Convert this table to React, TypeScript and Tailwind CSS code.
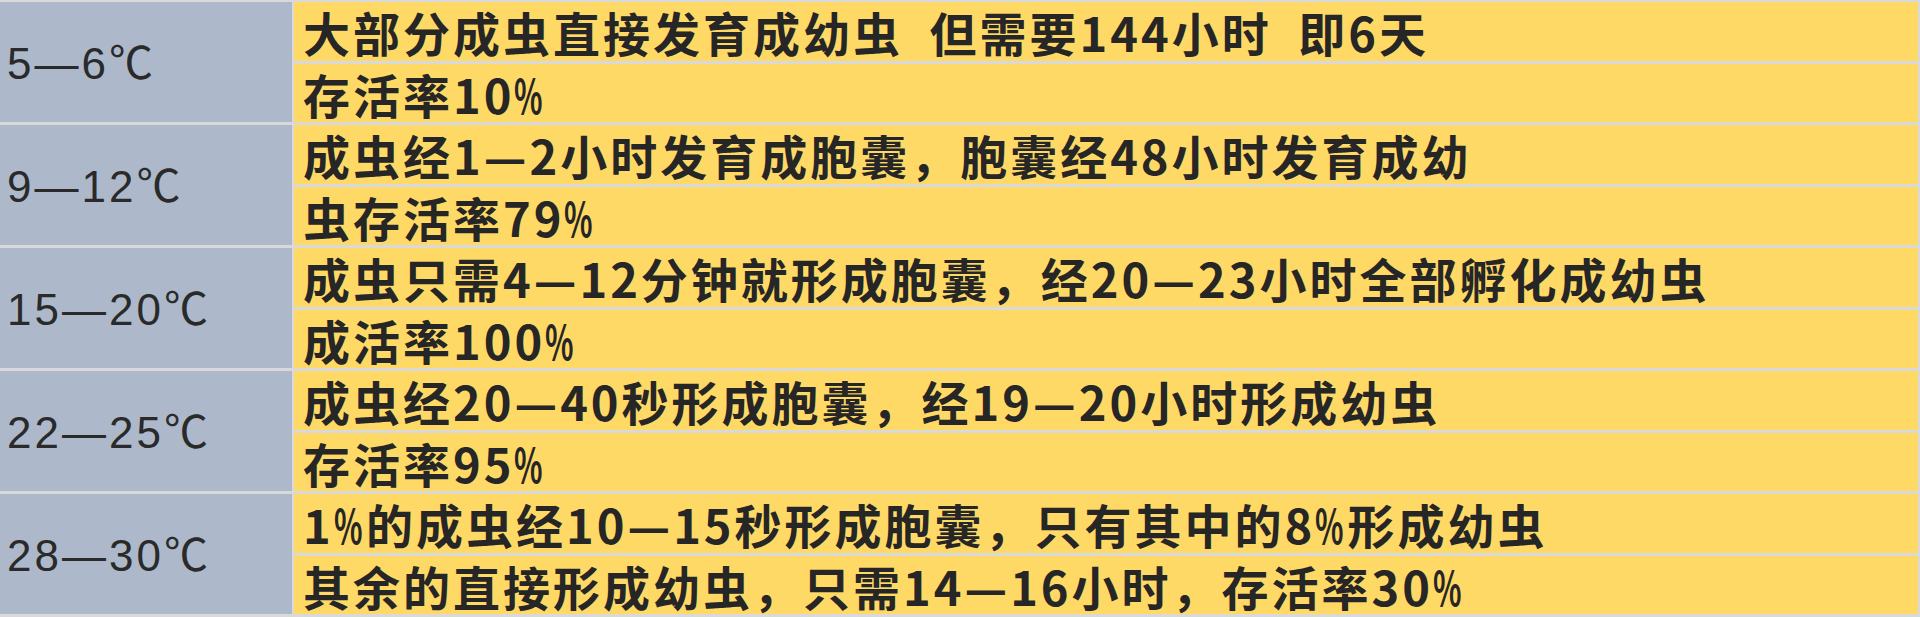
import React from "react";

const rows: { temp: string; lines: [string, string] }[] = [
  { temp: "5—6℃", lines: ["大部分成虫直接发育成幼虫\u2002但需要144小时\u2002即6天", "存活率10%"] },
  { temp: "9—12℃", lines: ["成虫经1—2小时发育成胞囊，胞囊经48小时发育成幼", "虫存活率79%"] },
  { temp: "15—20℃", lines: ["成虫只需4—12分钟就形成胞囊，经20—23小时全部孵化成幼虫", "成活率100%"] },
  { temp: "22—25℃", lines: ["成虫经20—40秒形成胞囊，经19—20小时形成幼虫", "存活率95%"] },
  { temp: "28—30℃", lines: ["1%的成虫经10—15秒形成胞囊，只有其中的8%形成幼虫", "其余的直接形成幼虫，只需14—16小时，存活率30%"] },
];

// the source font has a narrow percent sign, about as wide as a digit
function Line({ s }: { s: string }) {
  const parts = s.split("%");
  return (
    <>
      {parts.map((p, i) => (
        <React.Fragment key={i}>
          {p}
          {i < parts.length - 1 && (
            <span className="-mr-[16px] inline-block origin-left scale-x-[0.63]">%</span>
          )}
        </React.Fragment>
      ))}
    </>
  );
}

export default function App() {
  return (
    <div className="h-[617px] w-[1920px] overflow-hidden bg-[#d9d9d9] pt-[2px] pr-[2px] pb-[3px]">
      <div className="grid h-full grid-cols-[292px_1fr] grid-rows-10 gap-x-[2px] gap-y-[3px]">
        {rows.map((r) => (
          <React.Fragment key={r.temp}>
            <div className="row-span-2 flex items-center bg-[#adb9cb] pl-[7px] pt-[3px] text-[44px] tracking-[3px] text-[#2a2a2a] [font-family:'Liberation_Sans','Noto_Sans_CJK_SC',sans-serif]">
              {r.temp}
            </div>
            {r.lines.map((l, i) => (
              <div
                key={i}
                className="flex items-center whitespace-nowrap bg-[#ffd966] pl-[9px] pt-[1px] text-[47px] font-bold leading-none tracking-[3px] text-[#262626] [font-family:'Noto_Sans_CJK_SC',sans-serif]"
              >
                <Line s={l} />
              </div>
            ))}
          </React.Fragment>
        ))}
      </div>
    </div>
  );
}
